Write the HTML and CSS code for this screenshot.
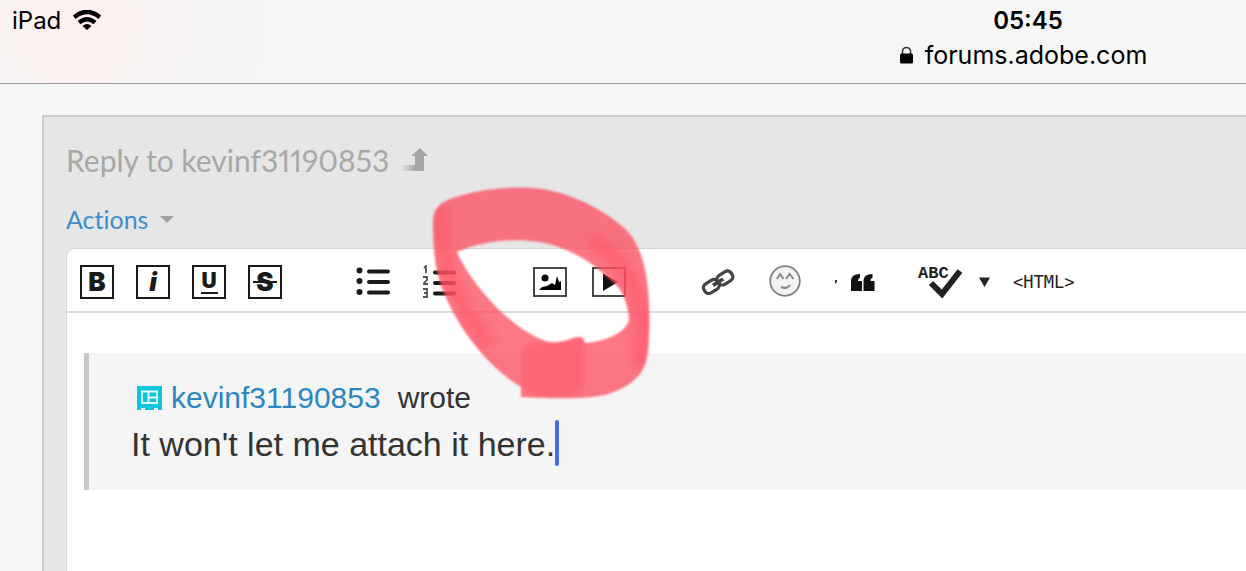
FILE: index.html
```html
<!DOCTYPE html>
<html lang="en">
<head>
<meta charset="UTF-8">
<meta name="viewport" content="width=device-width, initial-scale=1.0">
<title>Reply to kevinf31190853</title>
<link rel="stylesheet" href="styles.css">
</head>
<body>
<header class="browser">
  <div class="device">
    <span>iPad</span>
    <svg width="28" height="20" viewBox="0 0 28 20">
      <path d="M1.200 7.200Q14-3.200 26.800 7.200" fill="none" stroke="#000" stroke-width="4.600"/>
      <path d="M6 12.600Q14 5.800 22 12.600" fill="none" stroke="#000" stroke-width="4.200"/>
      <path d="M9.500 16Q14 12 18.500 16L14 20z"/>
    </svg>
  </div>
  <div class="address">
    <time>05:45</time>
    <div class="url">
      <svg width="13" height="18" viewBox="0 0 13 18">
        <path d="M2.500 8V5.500a4 4 0 0 1 8 0V8" fill="none" stroke="#333" stroke-width="1.600"/>
        <rect x="0" y="7.500" width="13" height="10" rx="1.500"/>
      </svg>
      <span>forums.adobe.com</span>
    </div>
  </div>
</header>

<main class="reply">
  <h1>Reply to kevinf31190853
    <svg width="27" height="24" viewBox="0 0 27 24">
      <defs>
        <linearGradient id="fade"><stop offset="0" stop-color="#a6a6a6" stop-opacity="0"/><stop offset="1" stop-color="#a6a6a6"/></linearGradient>
      </defs>
      <path d="M0 17H15V23H0z" fill="url(#fade)"/>
      <path d="M10 8 19 0 27 8H23V23H14V8z" fill="#a6a6a6"/>
    </svg>
  </h1>
  <button class="actions">Actions <span class="arrow"></span></button>

  <div class="editor">
    <div class="toolbar">
      <div class="group format">
        <button class="box" aria-label="Bold"><b>B</b></button>
        <button class="box" aria-label="Italic"><i>i</i></button>
        <button class="box" aria-label="Underline"><span class="under">U</span></button>
        <button class="box" aria-label="Strikethrough"><span class="strike">S</span></button>
      </div>
      <div class="group lists">
        <button aria-label="Bullet list">
          <svg width="34" height="30" viewBox="0 0 34 30">
            <g fill="#1a1a1a"><circle cx="3.500" cy="3.500" r="3"/><circle cx="3.500" cy="14" r="3"/><circle cx="3.500" cy="25" r="3"/></g>
            <path d="M13 4.500H32M13 15H32M13 25.500H32" stroke="#1a1a1a" stroke-width="4" stroke-linecap="round"/>
          </svg>
        </button>
        <button aria-label="Numbered list">
          <svg width="34" height="34" viewBox="0 0 34 34">
            <path d="M1 3 3 1V8M0 12H4V15L1 18V19H5M0 24H4V32H0M1 28H4" fill="none" stroke="#555" stroke-width="1.800"/>
            <path d="M12 7.500H31M12 18H31M12 28.500H31" stroke="#1a1a1a" stroke-width="4" stroke-linecap="round"/>
          </svg>
        </button>
      </div>
      <div class="group media">
        <button aria-label="Insert image">
          <svg width="34" height="30" viewBox="0 0 34 30">
            <rect x="1" y="1" width="32" height="28" fill="none" stroke="#333" stroke-width="1.800"/>
            <circle cx="12" cy="11" r="3.500"/>
            <path d="M6 23 9 20 14 19 19 16 22 18 24 9 26 15 28 14V23z"/>
          </svg>
        </button>
        <button aria-label="Insert video">
          <svg width="34" height="30" viewBox="0 0 34 30">
            <rect x="1" y="1" width="32" height="28" fill="none" stroke="#333" stroke-width="1.800"/>
            <path d="M11 6.500 26 15 11 24z" fill="#111"/>
          </svg>
        </button>
      </div>
      <div class="group insert">
        <button aria-label="Insert link">
          <svg width="34" height="26" viewBox="0 0 34 26">
            <g transform="rotate(-32 17 13)" fill="none" stroke="#444" stroke-width="3.200">
              <rect x="1" y="8" width="16" height="10.500" rx="4.500"/>
              <rect x="17" y="8" width="16" height="10.500" rx="4.500"/>
              <path d="M11 13.200H23" stroke-width="3.600"/>
            </g>
          </svg>
        </button>
        <button aria-label="Insert emoticon">
          <svg width="32" height="34" viewBox="0 0 32 34">
            <circle cx="16" cy="16" r="14.800" fill="#f3f3f3" stroke="#808080" stroke-width="1.800"/>
            <path d="M8 14 11 9 14.500 14M17 14 20.500 9 24.500 14" fill="none" stroke="#8c8c8c" stroke-width="2"/>
            <path d="M12 22Q18 24.500 21 20" fill="none" stroke="#8c8c8c" stroke-width="2"/>
          </svg>
        </button>
      </div>
      <div class="group extra">
        <button aria-label="Quote">
          <svg width="40" height="20" viewBox="0 0 40 20">
            <path d="M0 8h2v2L0 12z" fill="#333"/>
            <path id="q" d="M16 19V9Q16 2 25 2V6Q23 6 23 9H27V19z" fill="#111"/>
            <use href="#q" x="12.500"/>
          </svg>
        </button>
        <button class="spell" aria-label="Check spelling">
          <svg width="44" height="36" viewBox="0 0 44 36">
            <text x="0" y="14">ABC</text>
            <path d="M13 19 24 30 42 7" fill="none" stroke="#222" stroke-width="6"/>
          </svg>
        </button>
        <button class="pick" aria-label="Spelling language">
          <svg width="11" height="10" viewBox="0 0 11 10"><path d="M0 0.500H11L5.500 10z" fill="#222"/></svg>
        </button>
        <button class="html">&lt;HTML&gt;</button>
      </div>
    </div>

    <div class="content" contenteditable="true" role="textbox" aria-label="Reply text">
      <blockquote>
        <p class="author">
          <svg width="25" height="24" viewBox="0 0 25 24">
            <path d="M0 0H25V24H21V22H17V24H8V22H4V24H0z" fill="#0dc5dc"/>
            <path d="M5 5.500H20V17H5zM11.500 6V17M12 11.500H20" fill="none" stroke="#e4fbff" stroke-width="1.800"/>
          </svg>
          <a href="#kevinf31190853">kevinf31190853</a>
          <span class="wrote">wrote</span>
        </p>
        <p class="text">It won't let me attach it here.<span class="caret"></span></p>
      </blockquote>
    </div>
  </div>
</main>

<!-- marker circle round the image and video buttons -->
<svg class="marker" width="230" height="220" viewBox="428 184 230 220">
  <defs>
    <filter id="soft"><feGaussianBlur stdDeviation="1"/></filter>
    <filter id="softer" x="-60%" y="-30%" width="220%" height="160%"><feGaussianBlur stdDeviation="5"/></filter>
    <filter id="edge"><feGaussianBlur stdDeviation="1.500"/></filter>
    <clipPath id="ring">
      <path id="loop" clip-rule="evenodd" d="M433 222C433 208 441 202 453 198C475 190 500 187.500 522 187.500C562 187 603 209 623 227C646 247 649 285 649.500 320C649 340 649 356 644 367C638 380 625 389 605 395C580 400 545 398 521 397L521 387C490 368 463 335 447 300C436 278 433 255 433 222ZM457 252C492 237 530 238 556 246C585 256 600 270 616 285C624 292 629 310 629 320C626 332 608 341 585 343C584 337 580 336 573 338C562 342 553 344 543 340C505 325 468 278 457 252Z"/>
    </clipPath>
  </defs>
  <g filter="url(#soft)">
    <use href="#loop" fill="#fd5062" fill-rule="evenodd" fill-opacity=".78"/>
    <g clip-path="url(#ring)" fill="none" stroke="#ff5062" stroke-opacity=".45">
      <path d="M441 205Q440 245 452 280T490 345" stroke-width="14" filter="url(#softer)"/>
      <path d="M590 240Q628 262 638 300T638 365" stroke-width="18" filter="url(#softer)"/>
      <path d="M522 352Q523 343 545 343H565Q584 332 584 342V384Q584 396 555 396H534Q522 390 522 380z" fill="#ff5062" fill-opacity=".42" stroke="none" filter="url(#edge)"/>
    </g>
  </g>
</svg>
</body>
</html>
```

FILE: styles.css
```css
:root { --line:#cbcbcb; --panel:#e6e6e6; --ink:#1a1a1a; }
* { box-sizing:border-box; margin:0; padding:0; }
body {
  font-family:"Liberation Sans",Arial,sans-serif;
  background:#f7f7f7; color:#333; min-height:100vh;
  display:flex; flex-direction:column; position:relative; overflow:hidden;
}
svg { display:block; flex:none; }
button { border:none; background:none; font:inherit; color:inherit; cursor:pointer; }

.browser {
  display:grid; grid-template-columns:9fr 5fr; min-height:84px;
  border-bottom:1px solid #9c9c9c; color:#000; font-family:Inter,sans-serif;
  background:radial-gradient(circle at 75px 20px,#fdf0ee,#f6f4f5 130px,#f6f6f6 220px);
}
.device { display:flex; align-items:center; gap:12px; height:40px; padding-left:12px; font-size:24px; }
.address { display:flex; flex-direction:column; align-items:center; padding-top:4px; }
.address time { font-size:24px; line-height:34px; font-weight:600; padding-left:9px; }
.url { display:flex; align-items:center; gap:12px; font-size:25px; line-height:34px; }

.reply {
  flex:1; margin:31px 0 0 42px; padding:22px 0 0 22px; background:var(--panel);
  border:2px solid var(--line); border-right:none; border-bottom:none;
  display:flex; flex-direction:column; align-items:flex-start;
}
.reply h1, .actions { font-family:Lato,sans-serif; font-weight:400; font-variant-ligatures:none; }
.reply h1 {
  font-size:30px; line-height:42px; color:#a8a8a8; font-variant-numeric:proportional-nums;
  display:flex; align-items:center; gap:12px;
}
.actions {
  font-size:25px; line-height:32px; color:#3d8ecb; margin:22px 0 13px;
  display:flex; align-items:center; gap:12px;
}
.arrow { border:7px solid transparent; border-top-color:#a0a0a0; border-bottom:none; }

.editor {
  flex:1; align-self:stretch; background:#fff;
  border:1px solid #d6d6d6; border-right:none; border-bottom:none;
  border-top-left-radius:9px;
}
.toolbar { display:flex; align-items:center; height:64px; padding:4px 0 0 13px; border-bottom:2px solid #dcdcdc; }
.group { display:flex; align-items:center; flex:none; }
.format { gap:22px; margin-right:74px; }
.lists { gap:33px; margin-right:76px; }
.media { gap:25px; margin-right:75px; }
.insert { gap:34px; margin-right:34px; }
.box {
  width:34px; height:34px; border:2px solid var(--ink); color:var(--ink);
  font:900 26px/30px Inter,sans-serif;
}
.under { display:block; width:17px; margin:0 auto; font-size:21px; line-height:22px; border-bottom:2px solid var(--ink); }
.strike { display:block; background:linear-gradient(var(--ink),var(--ink)) center/24px 2px no-repeat; }
.spell { margin-left:43px; }
.spell text { font:700 17px "Liberation Mono",monospace; fill:#222; }
.pick { margin-left:17px; }
.html { margin-left:23px; font:17px/20px "DejaVu Sans Mono",monospace; color:#222; }

.content { padding:40px 0 80px 17px; outline:none; }
blockquote { background:#f5f5f5; border-left:5px solid #c8c8c8; padding:23px 0 22px 42px; }
.author { display:flex; align-items:center; gap:9px; padding-left:6px; font-size:30px; line-height:44px; }
.author a { color:#2e86c0; text-decoration:none; }
.wrote { margin-left:8px; }
.text { display:flex; align-items:flex-start; font-size:34px; line-height:48px; }
.caret { width:4px; height:46px; border-radius:2px; background:#456be8; }

.marker { position:absolute; left:428px; top:184px; pointer-events:none; }
```
